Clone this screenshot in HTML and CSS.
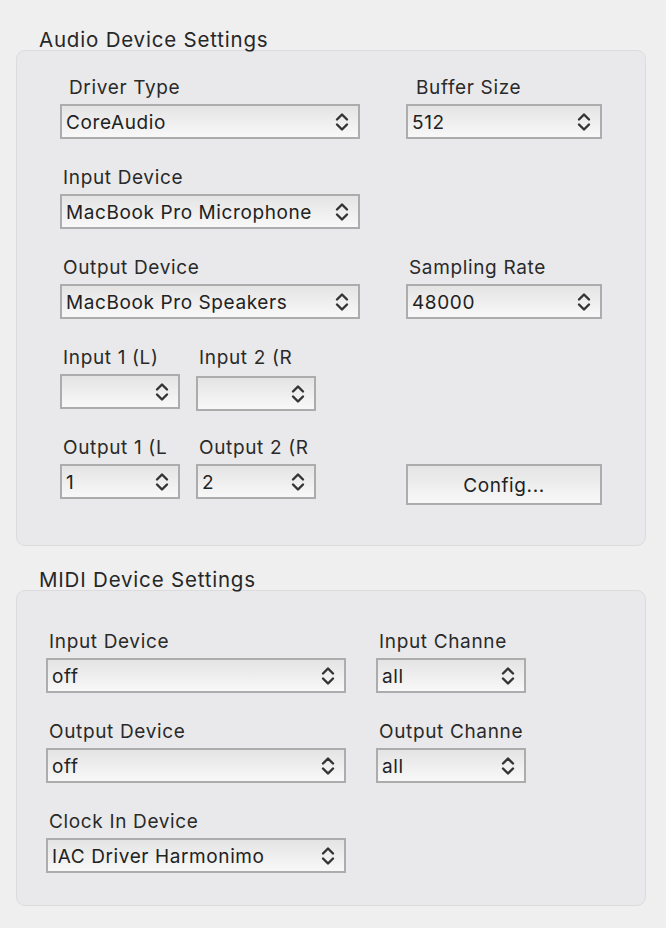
FILE: index.html
```html
<!DOCTYPE html>
<html>
<head>
<meta charset="utf-8">
<title>Device Settings</title>
<link rel="stylesheet" href="styles.css">
</head>
<body>
<div class="page">
  <section class="group">
    <h2 class="group-title">Audio Device Settings</h2>
    <div class="panel panel-audio">
      <div class="row spread">
        <div class="field w300">
          <span class="label ind-wide">Driver Type</span>
          <div class="select"><span class="value">CoreAudio</span><svg class="chev" viewBox="0 0 14 22"><path d="M2 8.5 L7 3.5 L12 8.5 M2 13.5 L7 18.5 L12 13.5"/></svg></div>
        </div>
        <div class="field w196">
          <span class="label ind-buffer">Buffer Size</span>
          <div class="select"><span class="value">512</span><svg class="chev" viewBox="0 0 14 22"><path d="M2 8.5 L7 3.5 L12 8.5 M2 13.5 L7 18.5 L12 13.5"/></svg></div>
        </div>
      </div>
      <div class="row spread">
        <div class="field w300">
          <span class="label">Input Device</span>
          <div class="select"><span class="value">MacBook Pro Microphone</span><svg class="chev" viewBox="0 0 14 22"><path d="M2 8.5 L7 3.5 L12 8.5 M2 13.5 L7 18.5 L12 13.5"/></svg></div>
        </div>
      </div>
      <div class="row spread">
        <div class="field w300">
          <span class="label">Output Device</span>
          <div class="select"><span class="value">MacBook Pro Speakers</span><svg class="chev" viewBox="0 0 14 22"><path d="M2 8.5 L7 3.5 L12 8.5 M2 13.5 L7 18.5 L12 13.5"/></svg></div>
        </div>
        <div class="field w196">
          <span class="label">Sampling Rate</span>
          <div class="select"><span class="value">48000</span><svg class="chev" viewBox="0 0 14 22"><path d="M2 8.5 L7 3.5 L12 8.5 M2 13.5 L7 18.5 L12 13.5"/></svg></div>
        </div>
      </div>
      <div class="row">
        <div class="pair">
          <div class="field w120">
            <span class="label">Input 1 (L)</span>
            <div class="select"><span class="value"></span><svg class="chev" viewBox="0 0 14 22"><path d="M2 8.5 L7 3.5 L12 8.5 M2 13.5 L7 18.5 L12 13.5"/></svg></div>
          </div>
          <div class="field w120">
            <span class="label">Input 2 (R</span>
            <div class="select nudge"><span class="value"></span><svg class="chev" viewBox="0 0 14 22"><path d="M2 8.5 L7 3.5 L12 8.5 M2 13.5 L7 18.5 L12 13.5"/></svg></div>
          </div>
        </div>
      </div>
      <div class="row spread">
        <div class="pair">
          <div class="field w120">
            <span class="label">Output 1 (L</span>
            <div class="select"><span class="value">1</span><svg class="chev" viewBox="0 0 14 22"><path d="M2 8.5 L7 3.5 L12 8.5 M2 13.5 L7 18.5 L12 13.5"/></svg></div>
          </div>
          <div class="field w120">
            <span class="label">Output 2 (R</span>
            <div class="select"><span class="value">2</span><svg class="chev" viewBox="0 0 14 22"><path d="M2 8.5 L7 3.5 L12 8.5 M2 13.5 L7 18.5 L12 13.5"/></svg></div>
          </div>
        </div>
        <button class="button w196" type="button">Config...</button>
      </div>
    </div>
  </section>

  <section class="group">
    <h2 class="group-title">MIDI Device Settings</h2>
    <div class="panel panel-midi">
      <div class="row midi-row">
        <div class="field w300">
          <span class="label">Input Device</span>
          <div class="select"><span class="value">off</span><svg class="chev" viewBox="0 0 14 22"><path d="M2 8.5 L7 3.5 L12 8.5 M2 13.5 L7 18.5 L12 13.5"/></svg></div>
        </div>
        <div class="field w150">
          <span class="label">Input Channe</span>
          <div class="select"><span class="value">all</span><svg class="chev" viewBox="0 0 14 22"><path d="M2 8.5 L7 3.5 L12 8.5 M2 13.5 L7 18.5 L12 13.5"/></svg></div>
        </div>
      </div>
      <div class="row midi-row">
        <div class="field w300">
          <span class="label">Output Device</span>
          <div class="select"><span class="value">off</span><svg class="chev" viewBox="0 0 14 22"><path d="M2 8.5 L7 3.5 L12 8.5 M2 13.5 L7 18.5 L12 13.5"/></svg></div>
        </div>
        <div class="field w150">
          <span class="label">Output Channe</span>
          <div class="select"><span class="value">all</span><svg class="chev" viewBox="0 0 14 22"><path d="M2 8.5 L7 3.5 L12 8.5 M2 13.5 L7 18.5 L12 13.5"/></svg></div>
        </div>
      </div>
      <div class="row midi-row">
        <div class="field w300">
          <span class="label">Clock In Device</span>
          <div class="select"><span class="value">IAC Driver Harmonimo</span><svg class="chev" viewBox="0 0 14 22"><path d="M2 8.5 L7 3.5 L12 8.5 M2 13.5 L7 18.5 L12 13.5"/></svg></div>
        </div>
      </div>
    </div>
  </section>
</div>
</body>
</html>
```

FILE: styles.css
```css
html, body {
  margin: 0;
  padding: 0;
}

body {
  width: 666px;
  min-height: 928px;
  background: #efeff0;
  font-family: Inter, "Noto Sans", "DejaVu Sans", sans-serif;
  color: #262626;
}

.page {
  padding-top: 30px;
}

.group + .group {
  margin-top: 24px;
}

.group-title {
  margin: 0 0 0 39px;
  font-size: 20.5px;
  line-height: 20px;
  font-weight: 400;
  letter-spacing: 0.8px;
  color: #272727;
}

.panel {
  margin-left: 16px;
  width: 630px;
  box-sizing: border-box;
  border: 1px solid #dcdcde;
  border-radius: 9px;
  background: #e9e9eb;
  display: flex;
  flex-direction: column;
  gap: 27px;
}

.panel-audio {
  padding: 25px 43px 40px;
}

.panel-midi {
  padding: 39px 29px 32px;
}

.row {
  display: flex;
  align-items: flex-start;
}

.spread {
  justify-content: space-between;
}

.midi-row {
  gap: 30px;
}

.pair {
  display: flex;
  gap: 16px;
}

.field {
  display: flex;
  flex-direction: column;
}

.w300 { width: 300px; }
.w196 { width: 196px; }
.w150 { width: 150px; }
.w120 { width: 120px; }

.label {
  display: block;
  font-size: 19px;
  line-height: 22px;
  padding-top: 1px;
  margin-bottom: 5px;
  padding-left: 3px;
  white-space: nowrap;
  letter-spacing: 0.65px;
  color: #2a2a2a;
}

.label.ind-wide {
  padding-left: 9px;
}

.label.ind-buffer {
  padding-left: 10px;
}

.select {
  height: 35px;
  box-sizing: border-box;
  border: 2px solid #acacac;
  background: linear-gradient(#e4e4e5, #f8f8f8);
  display: flex;
  align-items: center;
  justify-content: space-between;
  padding: 0 9px 0 4px;
  font-size: 19px;
  letter-spacing: 0.6px;
  color: #222;
}

.select.nudge {
  margin-top: 2px;
  margin-bottom: -2px;
}

.value {
  white-space: nowrap;
  padding-top: 2px;
}

.chev {
  width: 14px;
  height: 22px;
  flex: none;
}

.chev path {
  fill: none;
  stroke: #333;
  stroke-width: 2.4;
  stroke-linecap: round;
  stroke-linejoin: round;
}

.button {
  margin: 28px 0 0;
  height: 41px;
  box-sizing: border-box;
  border: 2px solid #acacac;
  background: linear-gradient(#e4e4e5, #f8f8f8);
  font-family: inherit;
  font-size: 19px;
  letter-spacing: 0.6px;
  color: #222;
  padding: 2px 0 0;
  text-align: center;
}
```
